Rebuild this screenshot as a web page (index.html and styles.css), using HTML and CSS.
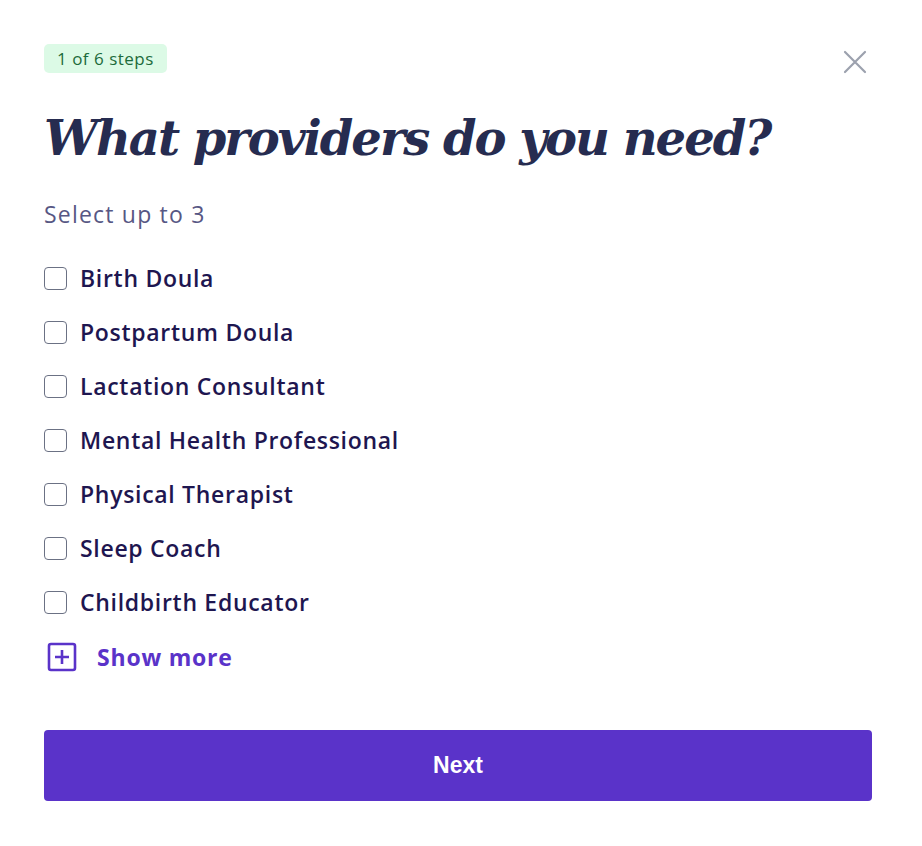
FILE: index.html
```html
<!DOCTYPE html>
<html lang="en">
<head>
  <meta charset="UTF-8">
  <meta name="viewport" content="width=device-width, initial-scale=1.0">
  <title>Providers</title>
  <link rel="stylesheet" href="styles.css">
</head>
<body>

<div class="modal">
  <div class="top">
    <span class="badge">1 of 6 steps</span>
    <button class="close" aria-label="Close">
      <svg width="24" height="24" viewBox="0 0 24 24"><path d="M2 2 L22 22 M22 2 L2 22" stroke="#9ca1ae" stroke-width="2.2" stroke-linecap="round" fill="none"/></svg>
    </button>
  </div>

  <h1>What providers do you need?</h1>
  <p class="hint">Select up to 3</p>

  <div class="options">
    <label class="option"><span class="box"></span>Birth Doula</label>
    <label class="option"><span class="box"></span>Postpartum Doula</label>
    <label class="option"><span class="box"></span>Lactation Consultant</label>
    <label class="option"><span class="box"></span>Mental Health Professional</label>
    <label class="option"><span class="box"></span>Physical Therapist</label>
    <label class="option"><span class="box"></span>Sleep Coach</label>
    <label class="option"><span class="box"></span>Childbirth Educator</label>
  </div>

  <a class="more" href="#">
    <svg width="30" height="30" viewBox="0 0 30 30"><rect x="2" y="2" width="26" height="26" rx="2" stroke="#5a33c9" stroke-width="2.6" fill="none"/><path d="M15 8 V22 M8 15 H22" stroke="#5a33c9" stroke-width="2.6" fill="none"/></svg>
    Show more
  </a>

  <button class="next">Next</button>
</div>

</body>
</html>
```

FILE: styles.css
```css
body { margin: 0; background: #fff; font-family: "Open Sans", sans-serif; }
.modal { padding: 44px 50px 44px 44px; width: 828px; }
.top { display: flex; justify-content: space-between; align-items: flex-start; }
.badge {
  background: #dcfae6;
  color: #1c6b3b;
  font-size: 17px;
  font-weight: 500;
  letter-spacing: 0.5px;
  padding: 4px 13px;
  border-radius: 5px;
  line-height: 21px;
}
.close { background: none; border: 0; padding: 0; margin-top: 6px; margin-right: 5px; cursor: pointer; }
h1 {
  font-family: "DejaVu Serif", serif;
  font-style: italic;
  font-weight: bold;
  font-size: 48px;
  color: #262c50;
  margin: 26px 0 0;
  line-height: 70px;
  letter-spacing: -2px;
}
.hint { color: #575784; font-size: 23px; letter-spacing: 1.2px; margin: 26px 0 0; line-height: 30px; }
.options { margin-top: 22px; display: flex; flex-direction: column; }
.option {
  display: flex;
  align-items: center;
  height: 54px;
  font-size: 23px;
  font-weight: 600;
  letter-spacing: 0.7px;
  color: #1e1650;
}
.box {
  width: 21px;
  height: 21px;
  border: 1.5px solid #6b7184;
  border-radius: 4px;
  margin-right: 13px;
}
.more {
  display: flex;
  align-items: center;
  gap: 20px;
  margin: 10px 0 0 3px;
  color: #5a33c9;
  font-size: 23px;
  font-weight: 700;
  letter-spacing: 0.8px;
  text-decoration: none;
  height: 36px;
}
.next {
  margin-top: 55px;
  width: 100%;
  height: 71px;
  border: 0;
  border-radius: 4px;
  background: #5a33c9;
  color: #fff;
  font-family: "Liberation Sans", sans-serif;
  font-weight: bold;
  font-size: 23px;
}
```
